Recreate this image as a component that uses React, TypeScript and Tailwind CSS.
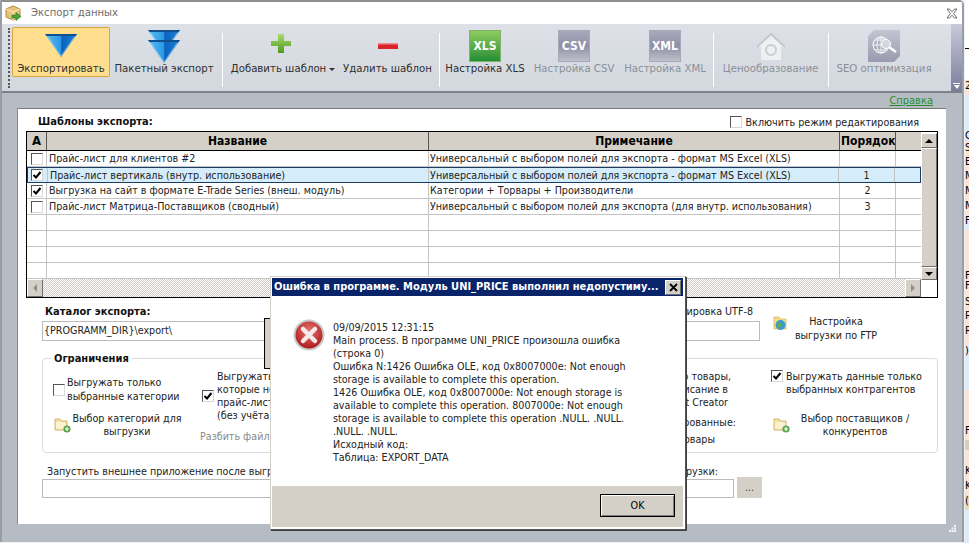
import React from "react";

const Check = ({ on = false }: { on?: boolean }) => (
  <span className="flex h-[12px] w-[12px] shrink-0 items-center justify-center border border-t-[#555] border-l-[#555] border-r-[#d8d8d8] border-b-[#d8d8d8] bg-white">
    {on && (
      <svg width="10" height="10" viewBox="0 0 10 10">
        <path d="M1.5 5 L4 7.5 L8.5 2" fill="none" stroke="#000" strokeWidth="2" />
      </svg>
    )}
  </span>
);

const Tri = ({ id, x = 0, y = 0 }: { id: string; x?: number; y?: number }) => (
  <g transform={`translate(${x} ${y})`}>
    <defs>
      <linearGradient id={id} x1="0" x2="1" y1="0" y2="0">
        <stop offset="0" stopColor="#5cc0f2" />
        <stop offset="0.5" stopColor="#2a96e4" />
        <stop offset="0.52" stopColor="#0c62bc" />
        <stop offset="1" stopColor="#1a80d8" />
      </linearGradient>
    </defs>
    <path d="M0 0 H32 L16 23 Z" fill={`url(#${id})`} />
    <path d="M0 0 H32 L30.5 2 H1.5 Z" fill="#10508f" />
    <path d="M3 3 L16 22 L29 3" fill="none" stroke="#9fdcf8" strokeWidth="0.8" opacity="0.7" />
  </g>
);

const FolderAdd = () => (
  <svg width="17" height="16" viewBox="0 0 17 16">
    <path d="M1 2 H6 L7.5 4 H13 V13 H1 Z" fill="#f3e2a0" stroke="#c4a95a" strokeWidth="0.8" />
    <rect x="2" y="5" width="10" height="7" fill="#fbf3cf" />
    <circle cx="13" cy="12" r="3.6" fill="#58a84a" />
    <path d="M13 10 V14 M11 12 H15" stroke="#fff" strokeWidth="1.2" />
  </svg>
);

const Box = ({ label, cls, w = "w-[32px]" }: { label: string; cls: string; w?: string }) => (
  <span className={`flex h-[32px] ${w} items-center justify-center border text-[12px] font-bold text-white ${cls}`}>{label}</span>
);

const ToolBtn = ({ label, icon, active, off, w, arrow }: { label: string; icon: React.ReactNode; active?: boolean; off?: boolean; w: string; arrow?: boolean }) => (
  <div className={`flex h-[50px] shrink-0 flex-col items-center rounded-[2px] ${w} ${active ? "border border-[#d9a441] bg-[#ffdf8e]" : "border border-transparent"} ${off ? "text-[#8b9097]" : "text-[#2f2f2f]"}`}>
    <div className="flex h-[34px] items-start justify-center pt-[2px]">{icon}</div>
    <div className="flex items-center gap-[3px] whitespace-nowrap text-[11.3px] leading-[14px]">
      {label}
      {arrow && <span className="h-0 w-0 border-x-[3px] border-t-[3px] border-x-transparent border-t-[#333]" />}
    </div>
  </div>
);

const Sep = () => (
  <div className="flex h-[60px] w-[8px] shrink-0 justify-center pt-[6px]">
    <div className="h-full w-[1px] bg-white" />
  </div>
);

const colCls = ["w-[20px]", "w-[382px]", "w-[411px]", "w-[56px]", "w-[25px]"];

const rows = [
  { on: false, a: "Прайс-лист для клиентов #2", b: "Универсальный с выбором полей для экспорта - формат MS Excel (XLS)", c: "" },
  { on: true, sel: true, a: "Прайс-лист вертикаль (внутр. использование)", b: "Универсальный с выбором полей для экспорта - формат MS Excel (XLS)", c: "1" },
  { on: true, a: "Выгрузка на сайт в формате E-Trade Series (внеш. модуль)", b: "Категории + Торвары + Производители", c: "2" },
  { on: false, a: "Прайс-лист Матрица-Поставщиков (сводный)", b: "Универсальный с выбором полей для экспорта (для внутр. использования)", c: "3" },
];

const strip: [string, string][] = [
  ["h-[48px] bg-white", ""],
  ["h-[1px] bg-black", ""],
  ["h-[31px] bg-white", ""],
  ["h-[15px] bg-[#fde3d2]", "2"],
  ["h-[35px] bg-[#dfeafa]", ""],
  ["h-[12px] bg-[#dfeafa]", "C"],
  ["h-[14px] bg-[#fde3d2]", "S"],
  ["h-[14px] bg-[#fde3d2]", "E"],
  ["h-[15px] bg-[#fde3d2]", "M"],
  ["h-[15px] bg-[#fde3d2]", "M"],
  ["h-[15px] bg-[#fde3d2]", "M"],
  ["h-[15px] bg-[#dfeafa]", "F"],
  ["h-[40px] bg-[#fde3d2]", ""],
  ["h-[10px] bg-[#fde3d2]", "F"],
  ["h-[16px] bg-[#fde3d2]", "F"],
  ["h-[14px] bg-[#fde3d2]", "S"],
  ["h-[15px] bg-[#fde3d2]", "R"],
  ["h-[20px] bg-[#fde3d2]", "R"],
  ["h-[45px] bg-[#dfeafa]", ")"],
  ["h-[35px] bg-[#fde3d2]", ""],
  ["h-[15px] bg-[#fde3d2]", "F"],
  ["h-[10px] bg-[#d9cdb8]", ""],
  ["h-[15px] bg-[#fde3d2]", ""],
  ["h-[15px] bg-[#fde3d2]", "K"],
  ["h-[15px] bg-[#fde3d2]", "K"],
  ["h-[15px] bg-[#ead9b8]", "("],
  ["h-[33px] bg-[#dfeafa]", ""],
];

const Chevron = ({ dir }: { dir: "up" | "down" | "left" | "right" }) => {
  if (dir === "up") return <span className="h-0 w-0 border-x-[4px] border-b-[4px] border-x-transparent border-b-black" />;
  if (dir === "down") return <span className="h-0 w-0 border-x-[4px] border-t-[4px] border-x-transparent border-t-black" />;
  if (dir === "left") return <span className="h-0 w-0 border-y-[4px] border-r-[4px] border-y-transparent border-r-[#8f8f8f]" />;
  return <span className="h-0 w-0 border-y-[4px] border-l-[4px] border-y-transparent border-l-[#8f8f8f]" />;
};

const raised = "border border-t-white border-l-white border-r-[#6f6f6f] border-b-[#6f6f6f] bg-[#d4d0c8]";

export default function App() {
  return (
    <div className="relative flex h-[543px] w-[969px] overflow-hidden bg-[#eef1f5] font-['DejaVu_Sans_Condensed','DejaVu_Sans',sans-serif] text-[10.65px] text-[#222]">
      <div className="flex h-[542px] w-[964px] shrink-0 flex-col rounded-tr-[5px] border-x-2 border-t-2 border-x-[#9a9ea4] border-t-[#8f8f8f] bg-[#b6bcc3]">
        {/* title */}
        <div className="flex h-[22px] shrink-0 items-center bg-white pl-[3px] pr-[2px]">
          <svg width="17" height="17" viewBox="0 0 17 17">
            <path d="M8 1 L15 4 V12 L8 15 L1 12 V4 Z" fill="#e6c27a" stroke="#b08a3e" />
            <path d="M1 4 L8 7 L15 4 M8 7 V15" fill="none" stroke="#fbe9bd" />
            <path d="M7 10 H11 V7.5 L16 11.5 L11 15.5 V13 H7 Z" fill="#4aa43a" stroke="#2c7a20" strokeWidth="0.6" />
          </svg>
          <span className="ml-[9px] pt-[1px] text-[11.2px] text-[#6e6e6e]">Экспорт данных</span>
          <svg className="ml-auto mr-[2px]" width="12" height="11" viewBox="0 0 12 11">
            <path d="M1 1 H3.5 L6 3.8 L8.5 1 H11 L7.6 5.5 L11 10 H8.5 L6 7.2 L3.5 10 H1 L4.4 5.5 Z" fill="none" stroke="#5f5f5f" strokeWidth="0.9" />
          </svg>
        </div>
        {/* toolbar */}
        <div className="flex h-[69px] shrink-0 border-b-2 border-b-[#7d8288] bg-gradient-to-b from-[#dde1e7] to-[#d3d8de] pt-[3px]">
          <div className="flex w-[10px] shrink-0 justify-end pr-[2px] pt-[1px]">
            <div className="h-[60px] w-[2px] border-l-2 border-dotted border-[#555]" />
          </div>
          <ToolBtn w="w-[98px]" active label="Экспортировать" icon={<svg width="34" height="26" viewBox="-1 -1 34 26" className="mt-[3px]"><Tri id="t1" /></svg>} />
          <ToolBtn w="w-[108px]" label="Пакетный экспорт" icon={<svg width="34" height="33" viewBox="-1 0 34 33"><Tri id="t2" /><Tri id="t3" y={10} /></svg>} />
          <Sep />
          <ToolBtn w="w-[114px]" arrow label="Добавить шаблон" icon={<svg width="20" height="20" viewBox="0 0 20 20" className="mt-[4px] -ml-[4px]"><defs><linearGradient id="pl" x1="0" x2="0" y1="0" y2="1"><stop offset="0" stopColor="#a9dc6c" /><stop offset="1" stopColor="#4f9a1e" /></linearGradient></defs><path d="M7 0 H13 V7 H20 V12 H13 V19 H7 V12 H0 V7 H7 Z" fill="url(#pl)" /></svg>} />
          <ToolBtn w="w-[95px]" label="Удалить шаблон" icon={<svg width="20" height="6" viewBox="0 0 20 6" className="mt-[13px]"><rect width="20" height="6" fill="#d8232a" /><rect width="20" height="1.5" fill="#ef8a8a" /></svg>} />
          <Sep />
          <ToolBtn w="w-[84px]" label="Настройка XLS" icon={<Box label="XLS" cls="border-[#7fb56a] bg-gradient-to-b from-[#8ccb5e] to-[#1f8f35]" />} />
          <ToolBtn w="w-[94px]" off label="Настройка CSV" icon={<Box label="CSV" cls="border-[#a8a8b8] bg-gradient-to-b from-[#a9a9bc] via-[#8f8fa6] to-[#c0c0cc]" />} />
          <ToolBtn w="w-[88px]" off label="Настройка XML" icon={<Box label="XML" cls="border-[#a8a8b8] bg-gradient-to-b from-[#a9a9bc] via-[#8f8fa6] to-[#c0c0cc]" />} />
          <Sep />
          <ToolBtn w="w-[107px]" off label="Ценообразование" icon={<svg width="30" height="28" viewBox="0 0 30 28" className="mt-[3px]"><path d="M15 1 L29 14 H25 V27 H5 V14 H1 Z" fill="#eef0f2" /><path d="M1 14 L15 1 L29 14" fill="none" stroke="#c4c8ce" strokeWidth="2" /><circle cx="15" cy="17" r="5" fill="none" stroke="#c9ccd2" strokeWidth="2" /></svg>} />
          <Sep />
          <ToolBtn w="w-[104px]" off label="SEO оптимизация" icon={<svg width="32" height="32" viewBox="0 0 32 32"><defs><linearGradient id="seo" x1="0" x2="0" y1="0" y2="1"><stop offset="0" stopColor="#c4c4d2" /><stop offset="1" stopColor="#9a9ab0" /></linearGradient></defs><path d="M6 0 H32 V26 L26 32 H0 V6 Z" fill="url(#seo)" /><circle cx="13" cy="15" r="8" fill="none" stroke="#fff" strokeWidth="1" /><path d="M5 15 H21 M13 7 V23 M7 10 H19 M7 20 H19" stroke="#fff" strokeWidth="0.8" /><ellipse cx="13" cy="15" rx="4" ry="8" fill="none" stroke="#fff" strokeWidth="0.8" /><circle cx="18" cy="14" r="4.5" fill="#d6d6e0" stroke="#fff" /><path d="M21 17 L28 22" stroke="#fff" strokeWidth="2.5" /></svg>} />
          <div className="flex-1" />
          <div className="-mt-[3px] flex w-[11px] shrink-0 flex-col items-center justify-end bg-gradient-to-b from-[#c9cbdb] to-[#7c7c9c] pb-[2px]">
            <span className="mb-[1px] h-[1px] w-[7px] bg-white" />
            <span className="h-0 w-0 border-x-[3.5px] border-t-[4px] border-x-transparent border-t-white" />
          </div>
        </div>
        {/* help bar */}
        <div className="flex h-[15px] shrink-0 justify-end pr-[29px]">
          <a className="text-[11px] leading-[15px] text-[#2a8f2a] underline">Справка</a>
        </div>
        {/* panel */}
        <div className="ml-[15px] mr-[16px] h-[416px] shrink-0 border-t border-l border-t-[#777] border-l-[#8a8a8a] bg-white pl-[8px] pt-[5px]">
          <div className="flex h-[17px] items-center">
            <b className="ml-[12px] text-[11px] font-bold text-[#111]">Шаблоны экспорта:</b>
            <div className="ml-auto mr-[27px] flex items-center gap-[4px]">
              <Check />
              <span className="text-[10.65px]">Включить режим редактирования</span>
            </div>
          </div>
          {/* table */}
          <div className="flex h-[167px] w-[912px] border border-black">
            <div className="flex w-[894px] flex-col">
              <div className="flex h-[19px] shrink-0 border-b border-black bg-[#d4d0c8] text-[12px] font-bold leading-[18px] text-black">
                <div className={`${colCls[0]} border-r border-[#555] text-center text-[13px]`}>A</div>
                <div className={`${colCls[1]} border-r border-[#555] text-center`}>Название</div>
                <div className={`${colCls[2]} border-r border-[#555] text-center`}>Примечание</div>
                <div className={`${colCls[3]} overflow-hidden whitespace-nowrap border-r border-[#555] pl-[1px]`}>Порядок</div>
                <div className={colCls[4]} />
              </div>
              {rows.map((r, i) => (
                <div key={i} className={`flex h-[16px] shrink-0 border-b leading-[15px] ${r.sel ? "box-border border-y border-x border-[#1d3c63] bg-[#d5edfb]" : "border-[#c4c4c4]"}`}>
                  <div className={`${colCls[0]} flex items-center justify-center border-r border-[#c4c4c4]`}><Check on={r.on} /></div>
                  <div className={`${colCls[1]} overflow-hidden whitespace-nowrap border-r border-[#c4c4c4] pl-[2px]`}>{r.a}</div>
                  <div className={`${colCls[2]} overflow-hidden whitespace-pre border-r border-[#c4c4c4] pl-[1px]`}>{r.b}</div>
                  <div className={`${colCls[3]} border-r border-[#c4c4c4] text-center`}>{r.c}</div>
                  <div className={colCls[4]} />
                </div>
              ))}
              {[0, 1, 2, 3].map((i) => (
                <div key={i} className="flex h-[16px] shrink-0 border-b border-[#c4c4c4]">
                  <div className={`${colCls[0]} border-r border-[#c4c4c4]`} />
                  <div className={`${colCls[1]} border-r border-[#c4c4c4]`} />
                  <div className={`${colCls[2]} border-r border-[#c4c4c4]`} />
                  <div className={`${colCls[3]} border-r border-[#c4c4c4]`} />
                </div>
              ))}
              <div className="flex h-[18px] shrink-0 bg-[repeating-conic-gradient(#cfcdc6_0_25%,#fff_0_50%)] bg-size-[2px_2px]">
                <div className={`flex w-[16px] items-center justify-center ${raised}`}><Chevron dir="left" /></div>
                <div className="flex-1" />
                <div className={`flex w-[16px] items-center justify-center ${raised}`}><Chevron dir="right" /></div>
              </div>
            </div>
            <div className="flex flex-1 flex-col pt-[1px]">
              <div className={`flex h-[15px] shrink-0 items-center justify-center ${raised}`}><Chevron dir="up" /></div>
              <div className={`h-[119px] shrink-0 ${raised}`} />
              <div className={`flex h-[13px] shrink-0 items-center justify-center ${raised}`}><Chevron dir="down" /></div>
            </div>
          </div>
          {/* catalog */}
          <div className="mt-[7px] flex pl-[16px]">
            <div className="w-[718px]">
              <b className="block pl-[3px] text-[11px] font-bold leading-[14px] text-[#111]">Каталог экспорта:</b>
              <div className="mt-[2px] h-[20px] border border-[#bbb] pl-[1px] leading-[18px]">{"{PROGRAMM_DIR}\\export\\"}</div>
            </div>
            <div className="-ml-[230px] w-[230px]">
              <div className="pr-[7px] text-right leading-[14px]">Кодировка UTF-8</div>
            </div>
            <div className="mt-[10px] ml-[13px] flex">
              <svg width="17" height="17" viewBox="0 0 17 17">
                <path d="M1 2 H6 L7.5 4 H13 V14 H1 Z" fill="#f5dc8c" stroke="#d7b95a" strokeWidth="0.8" />
                <circle cx="7.5" cy="10" r="5" fill="#3c9ad0" />
                <path d="M4 8 Q7 6 8 9 T5 13 Z" fill="#5cb04a" />
              </svg>
              <div className="w-[90px] whitespace-nowrap pl-[2px] text-center leading-[14px]">Настройка<br />выгрузки по FTP</div>
            </div>
          </div>
          {/* group */}
          <div className="relative ml-[16px] mt-[15px] flex h-[95px] w-[896px] rounded-[4px] border border-[#dcdcdc] pt-[11px]">
            <b className="absolute -top-[7px] left-[8px] bg-white px-[3px] text-[11px] font-bold leading-[13px] text-[#111]">Ограничения</b>
            <div className="ml-[10px] w-[149px] shrink-0 pt-[6px]">
              <div className="flex items-center gap-[2px] leading-[13.5px]">
                <Check />
                <span className="whitespace-nowrap">Выгружать только<br />выбранные категории</span>
              </div>
              <div className="mt-[9px] flex items-center pl-[1px] leading-[13px]">
                <FolderAdd />
                <div className="w-[112px] whitespace-nowrap text-center">Выбор категорий для<br />выгрузки</div>
              </div>
            </div>
            <div className="w-[270px] shrink-0">
              <div className="flex items-center gap-[3px] leading-[13px]">
                <Check on />
                <span className="whitespace-nowrap">Выгружать только товары,<br />которые не имеют цены в<br />прайс-листах поставщиков<br />(без учёта остатков)</span>
              </div>
              <div className="-ml-[2px] mt-[8px] leading-[13px] text-[#888]">Разбить файл на части</div>
            </div>
            <div className="w-[260px] shrink-0 text-right">
              <div className="leading-[13px]">
                <div className="pr-[1px]">Выгружать только товары,</div>
                <div className="pr-[4px]">имеющие описание в</div>
                <div className="pr-[4px]">Product Creator</div>
              </div>
              <div className="-mr-[4px] mt-[5px] leading-[17px]">
                <div>Сгруппированные:</div>
                <div className="pr-[21px]">все товары</div>
              </div>
            </div>
            <div className="ml-[39px] w-[165px] shrink-0">
              <div className="flex items-start gap-[3px] leading-[13px]">
                <Check on />
                <span className="whitespace-nowrap">Выгружать данные только<br />выбранных контрагентов</span>
              </div>
              <div className="mt-[16px] flex items-center pl-[2px] leading-[13px]">
                <FolderAdd />
                <div className="w-[130px] text-center">Выбор поставщиков /<br />конкурентов</div>
              </div>
            </div>
          </div>
          {/* external */}
          <div className="mt-[12px] pl-[16px]">
            <div className="flex w-[676px] justify-between leading-[14px]">
              <span className="pl-[5px]">Запустить внешнее приложение после выгрузки:</span>
              <span>Параметры выгрузки:</span>
            </div>
            <div className="flex items-start">
              <div className="h-[19px] w-[692px] border border-[#bbb]" />
              <div className="-mt-[2px] ml-[3px] flex h-[21px] w-[25px] items-center justify-center bg-[#d4d0c8] leading-[12px] text-[#444]">...</div>
            </div>
          </div>
        </div>
        <div className="flex flex-1 items-start justify-end pr-[6px] pt-[1px]">
          <svg width="7" height="7" viewBox="0 0 7 7">
            <path d="M5 0 h2 v2 h-2 Z M2.5 2.5 h2 v2 h-2 Z M5 2.5 h2 v2 h-2 Z M0 5 h2 v2 h-2 Z M2.5 5 h2 v2 h-2 Z M5 5 h2 v2 h-2 Z" fill="#f2f4f8" />
          </svg>
        </div>
      </div>
      {/* neighbouring window strip */}
      <div className="ml-[1px] flex w-[4px] shrink-0 flex-col">
        {strip.map(([c, t], i) => (
          <div key={i} className={`shrink-0 overflow-hidden whitespace-nowrap text-[11px] leading-[12px] text-black ${c}`}>{t}</div>
        ))}
      </div>

      {/* hidden progress box */}
      <div className="absolute left-[264px] top-[318px] h-[51px] w-[40px] border border-black bg-[#d4d0c8]" />

      {/* dialog */}
      <div className="absolute left-[270px] top-[276px] flex h-[254px] w-[416px] flex-col border border-[#555] border-t-[#d4d0c8] border-l-[#d4d0c8] bg-white p-[1px] pr-[2px] pb-[2px] shadow-[inset_1px_1px_0_#fff,1px_1px_0_#404040]">
        <div className="flex h-[18px] shrink-0 items-center bg-[#0a246a] pl-[2px] pr-[2px] text-[11px] font-bold text-white">
          <span className="min-w-0 flex-1 overflow-hidden whitespace-nowrap">Ошибка в программе. Модуль UNI_PRICE выполнил недопустиму...</span>
          <span className={`flex h-[15px] w-[16px] shrink-0 items-center justify-center ${raised}`}>
            <svg width="9" height="9" viewBox="0 0 9 9"><path d="M1 1 L8 8 M8 1 L1 8" stroke="#000" strokeWidth="1.8" /></svg>
          </span>
        </div>
        <div className="flex h-[190px] shrink-0 pl-[21px] pt-[25px]">
          <svg width="32" height="32" viewBox="0 0 32 32" className="-mt-[2px] shrink-0">
            <defs>
              <radialGradient id="err" cx="0.5" cy="0.35" r="0.7">
                <stop offset="0" stopColor="#e87272" />
                <stop offset="1" stopColor="#a81414" />
              </radialGradient>
            </defs>
            <circle cx="16" cy="16" r="15.5" fill="#c9c9c9" />
            <circle cx="16" cy="16" r="13.5" fill="url(#err)" />
            <path d="M10 10 L22 22 M22 10 L10 22" stroke="#f4eaea" strokeWidth="4.5" strokeLinecap="round" />
          </svg>
          <div className="ml-[8px] whitespace-nowrap leading-[13px] text-[#222]">
            <div>09/09/2015 12:31:15</div>
            <div>Main process. В программе UNI_PRICE произошла ошибка</div>
            <div>(строка 0)</div>
            <div>Ошибка N:1426 Ошибка OLE, код 0x8007000e: Not enough</div>
            <div>storage is available to complete this operation.</div>
            <div>1426 Ошибка OLE, код 0x8007000e: Not enough storage is</div>
            <div>available to complete this operation. 8007000e: Not enough</div>
            <div>storage is available to complete this operation .NULL. .NULL.</div>
            <div>.NULL. .NULL.</div>
            <div>Исходный код:</div>
            <div>Таблица: EXPORT_DATA</div>
          </div>
        </div>
        <div className="flex flex-1 items-start justify-end bg-[#d4d0c8] pr-[8px] pt-[8px]">
          <div className="flex h-[23px] w-[75px] items-center justify-center border border-black shadow-[inset_1px_1px_0_#fff,inset_-1px_-1px_0_#808080] text-black">OK</div>
        </div>
      </div>
    </div>
  );
}
